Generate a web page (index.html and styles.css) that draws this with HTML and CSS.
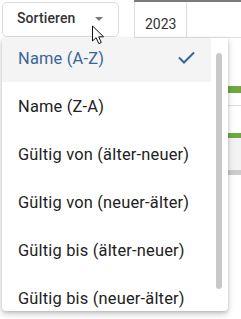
FILE: index.html
```html
<!DOCTYPE html>
<html lang="de">
<head>
<meta charset="utf-8">
<link rel="stylesheet" href="styles.css">
</head>
<body>
<div class="page">
  <div class="toolbar">
    <div class="sort-btn">
      <span class="sort-label">Sortieren</span>
      <span class="caret"></span>
    </div>
    <div class="table-head">
      <div class="cell year">2023</div>
      <div class="cell"></div>
    </div>
  </div>
  <div class="table-body">
    <div class="row-gap r1"></div>
    <div class="bar-green"></div>
    <div class="row-gap r2"></div>
    <div class="line"></div>
    <div class="row-gap r3"></div>
    <div class="bar-green thin"></div>
    <div class="shade"></div>
    <div class="bar-gray"></div>
  </div>

  <div class="menu">
    <div class="menu-list">
      <ul class="items">
        <li class="item selected">
          <span>Name (A-Z)</span>
          <svg class="check" width="18" height="14" viewBox="0 0 18 14"><polyline points="1,6.5 6,11.5 16,1.5" fill="none" stroke="#3a6598" stroke-width="2"/></svg>
        </li>
        <li class="item"><span>Name (Z-A)</span></li>
        <li class="item"><span>Gültig von (älter-neuer)</span></li>
        <li class="item"><span>Gültig von (neuer-älter)</span></li>
        <li class="item"><span>Gültig bis (älter-neuer)</span></li>
        <li class="item"><span>Gültig bis (neuer-älter)</span></li>
      </ul>
    </div>
    <div class="scroll-track"><div class="thumb"></div></div>
  </div>

  <svg class="cursor" width="15" height="20" viewBox="0 0 15 20">
    <path d="M1.5 1 L1.5 16 L5.1 12.7 L7.8 18.6 L10.3 17.5 L7.7 11.8 L12.6 11.8 Z" fill="#fff" stroke="#111" stroke-width="1" stroke-linejoin="round"/>
  </svg>
</div>
</body>
</html>
```

FILE: styles.css
```css
html, body {
  margin: 0;
  padding: 0;
  background: #fff;
}
body {
  width: 241px;
  height: 319px;
  overflow: hidden;
  font-family: Roboto, "Liberation Sans", sans-serif;
}
.page {
  position: relative;
  width: 241px;
  height: 319px;
  overflow: hidden;
}
.toolbar {
  display: flex;
  height: 38px;
}
.sort-btn {
  box-sizing: border-box;
  margin: 2px 0 0 2px;
  width: 117px;
  height: 35px;
  border: 1px solid #dcdcdc;
  border-radius: 5px;
  display: flex;
  align-items: center;
  padding-left: 14px;
}
.sort-label {
  font-size: 14px;
  font-weight: 500;
  color: #333;
  letter-spacing: 0.1px;
  margin-top: -3px;
}
.caret {
  width: 0;
  height: 0;
  border-left: 4px solid transparent;
  border-right: 4px solid transparent;
  border-top: 4px solid #7a7a7a;
  margin-left: 20px;
  margin-top: -1px;
}
.table-head {
  margin-left: 15px;
  flex: 1;
  display: flex;
  border-top: 2px solid #7b7b7b;
  border-bottom: 1px solid #e2e2e2;
  box-sizing: border-box;
}
.cell {
  border-left: 1px solid #dedede;
  box-sizing: border-box;
  flex: 1;
}
.cell.year {
  flex: 0 0 52px;
  font-size: 14px;
  color: #333;
  padding: 14px 0 0 10px;
}
.table-body {
  margin-left: 134px;
  display: flex;
  flex-direction: column;
}
.r1 { height: 48px; }
.bar-green {
  height: 7px;
  background: #6fa840;
}
.bar-green.thin { height: 5px; }
.r2 { height: 12px; }
.line {
  height: 1px;
  background: #dedede;
}
.r3 { height: 27px; }
.shade {
  height: 32px;
  background: #f3f3f3;
}
.bar-gray {
  height: 5px;
  background: #cccccc;
}
.menu {
  position: absolute;
  left: 2px;
  top: 38px;
  width: 226px;
  height: 273px;
  background: #fff;
  border-radius: 0 0 4px 4px;
  box-shadow: 0 3px 6px rgba(0,0,0,0.22), 0 1px 3px rgba(0,0,0,0.12);
  display: flex;
  overflow: hidden;
}
.menu-list {
  width: 209px;
  overflow: hidden;
}
.items {
  list-style: none;
  margin: -4px 0 0 0;
  padding: 0;
}
.item {
  height: 48px;
  display: flex;
  align-items: center;
  justify-content: space-between;
  padding: 0 16px;
  font-size: 16.4px;
  color: #222;
  letter-spacing: 0.2px;
}
.item.selected {
  background: #f4f4f4;
  color: #3a6598;
}
.check {
  margin-right: -1px;
}
.scroll-track {
  flex: 1;
  padding: 15px 0 0 5px;
}
.thumb {
  width: 6px;
  height: 236px;
  border-radius: 3px;
  background: #c8c8c8;
}
.cursor {
  position: absolute;
  left: 91px;
  top: 25px;
  z-index: 2;
}
```
